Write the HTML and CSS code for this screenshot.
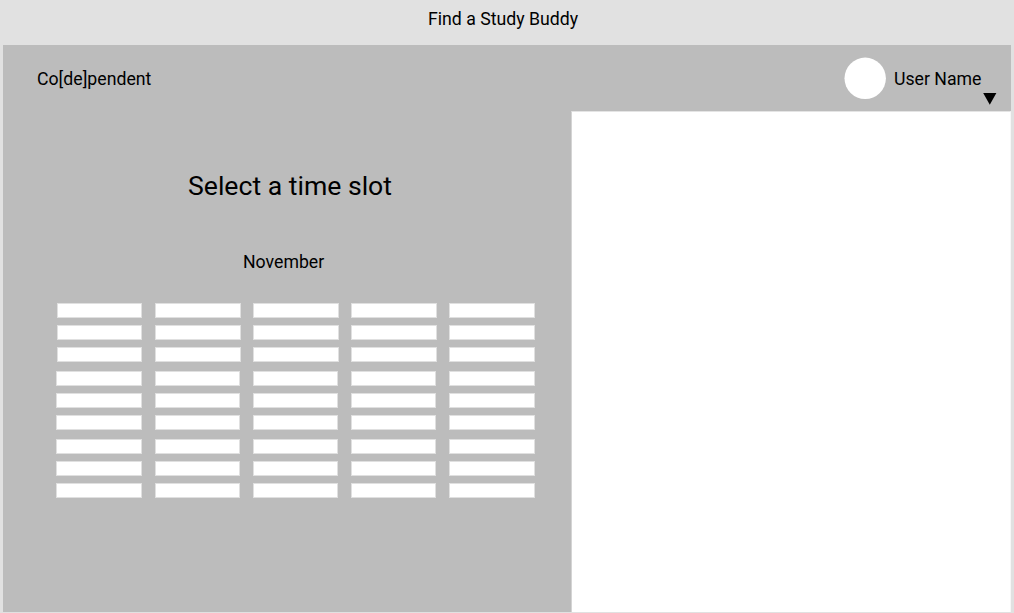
FILE: index.html
```html
<!DOCTYPE html>
<html lang="en">
<head>
<meta charset="utf-8">
<title>Find a Study Buddy</title>
<link rel="stylesheet" href="styles.css">
</head>
<body>
<h1 class="page-title">Find a Study Buddy</h1>
<div class="app">
  <header class="topbar">
    <span class="brand">Co[de]pendent</span>
    <div class="user">
      <svg class="avatar" width="42" height="42" viewBox="0 0 42 42"><circle cx="21.2" cy="21.3" r="20.7"/></svg>
      <span class="user-name">User Name</span>
      <svg class="caret" width="14" height="12" viewBox="0 0 14 12"><path d="M0.2 0H13.4L6.8 11.7Z"/></svg>
    </div>
  </header>
  <main class="content">
    <section class="schedule">
      <h2 class="heading">Select a time slot</h2>
      <p class="month">November</p>
      <div class="weeks">
        <div class="week first">
          <i></i><i></i><i></i><i></i><i></i>
          <i></i><i></i><i></i><i></i><i></i>
          <i></i><i></i><i></i><i></i><i></i>
        </div>
        <div class="week">
          <i></i><i></i><i></i><i></i><i></i>
          <i></i><i></i><i></i><i></i><i></i>
          <i></i><i></i><i></i><i></i><i></i>
        </div>
        <div class="week">
          <i></i><i></i><i></i><i></i><i></i>
          <i></i><i></i><i></i><i></i><i></i>
          <i></i><i></i><i></i><i></i><i></i>
        </div>
      </div>
    </section>
    <aside class="details"></aside>
  </main>
</div>
</body>
</html>
```
FILE: styles.css
```css
* { box-sizing: border-box; }

body {
  margin: 0;
  height: 613px;
  display: flex;
  flex-direction: column;
  overflow: hidden;
  background: #e1e1e1;
  color: #000;
  font: 17.7px/21px Roboto, sans-serif;
}

.page-title {
  margin: 0;
  height: 45px;
  padding: 9px 0 0 428px;
  font: inherit;
}

.app {
  width: 1008px;
  height: 567px;
  margin-left: 3px;
  background: #bcbcbc;
}

.topbar {
  height: 66px;
  display: flex;
  justify-content: space-between;
  padding-left: 34px;
}

.brand { padding-top: 24px; }

.user {
  display: flex;
  align-items: flex-start;
  padding-right: 14px;
}

.avatar {
  margin: 12px 8px 0 0;
  fill: #fff;
}

.user-name { padding-top: 24px; }

.caret { margin: 48px 0 0 1.6px; }

.content {
  display: flex;
  height: 501px;
}

.schedule { width: 568px; }

.heading {
  margin: 0;
  padding: 59px 0 0 185px;
  font-size: 26.6px;
  line-height: 32px;
  font-weight: 400;
}

.month {
  margin: 0;
  padding: 50px 0 0 240px;
}

.weeks {
  display: flex;
  flex-direction: column;
  gap: 9px;
  padding: 30px 0 0 53.4px;
}

.week {
  display: grid;
  grid-template-columns: repeat(5, 85.4px);
  grid-auto-rows: 15px;
  gap: 7px 12.8px;
}

.week.first {
  margin-left: 0.4px;
  grid-template-columns: repeat(5, 85.6px);
  column-gap: 12.55px;
}

.week i {
  background: #fff;
  border: 1px solid #e0e0e0;
}

.details {
  flex: 1;
  background: #fff;
  border-top: 1px solid #e4e4e4;
  border-left: 1px solid #d4d4d4;
  border-right: 1px solid #f7f7f7;
}
```
